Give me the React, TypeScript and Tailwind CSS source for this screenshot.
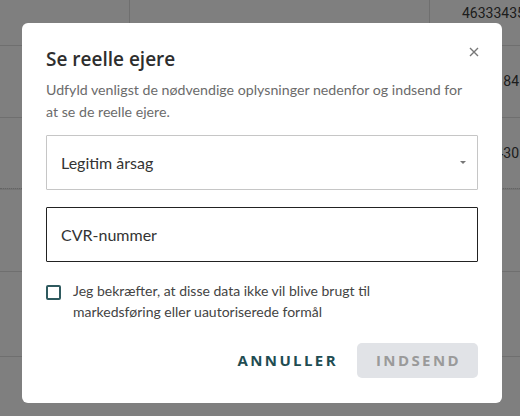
import { useState } from "react";

const bodyFont = { fontFamily: "Lato, 'Noto Sans', sans-serif" };
const headFont = { fontFamily: "'Open Sans', 'Noto Sans', sans-serif" };

function BackgroundTable() {
  return (
    <div className="w-full h-[416px] bg-white text-[14px] text-[#3a3a3a]" style={{ fontFamily: "Roboto, Arial, sans-serif" }}>
      <div className="grid grid-cols-[130px_300px_1fr] h-[46px] border-b border-[#dedede]">
        <div className="border-r border-[#dedede]" />
        <div className="border-r border-[#dedede]" />
        <div className="pl-[32px] pt-[3px] whitespace-nowrap overflow-hidden">46333435</div>
      </div>
      <div className="flex items-center justify-end h-[72px] border-b border-[#dedede] pr-[1px] whitespace-nowrap overflow-hidden">
        184
      </div>
      <div className="flex items-center justify-end h-[70px] pr-[1px] whitespace-nowrap overflow-hidden">
        430
      </div>
      <div className="h-[2px] border-t border-dotted border-[#c8c8c8] bg-[#e8e8e8]" />
      <div className="h-[82px] border-b border-[#dedede]" />
      <div className="h-[85px] border-b border-[#dedede]" />
    </div>
  );
}

function Modal() {
  const [reason, setReason] = useState("");
  const [cvr, setCvr] = useState("");
  const [agreed, setAgreed] = useState(false);

  return (
    <div className="absolute left-[22px] top-[23px] w-[480px] h-[380px] bg-white rounded-[6px] px-[24px] pt-[22px] pb-[25px] flex flex-col">
      <button className="absolute right-[22px] top-[23px] w-[12px] h-[12px] flex items-center justify-center text-[#777]">
        <svg width="10" height="10" viewBox="0 0 10 10" fill="none" stroke="currentColor" strokeWidth="1.4">
          <path d="M1 1L9 9M9 1L1 9" />
        </svg>
      </button>

      <h2 className="text-[19px] leading-[28px] font-semibold text-[#2e2e2e]" style={headFont}>
        Se reelle ejere
      </h2>

      <p className="mt-[6px] pr-[8px] text-[14.2px] leading-[22px] text-[#6b6b6b]" style={bodyFont}>
        Udfyld venligst de nødvendige oplysninger nedenfor og indsend for at se de reelle ejere.
      </p>

      {/* Reason select */}
      <div className="relative mt-[12px] h-[55px] border border-[#c6c6c6] rounded-[1px] flex items-center pl-[14px] pr-[11px]" style={bodyFont}>
        <select
          value={reason}
          onChange={(e) => setReason(e.target.value)}
          className="absolute inset-0 opacity-0 cursor-pointer"
        >
          <option value="">Legitim årsag</option>
        </select>
        <span className="text-[16px] text-[#333]">Legitim årsag</span>
        <span className="ml-auto w-0 h-0 border-l-[3px] border-r-[3px] border-t-[3px] border-l-transparent border-r-transparent border-t-[#777]" />
      </div>

      {/* CVR input */}
      <input
        value={cvr}
        onChange={(e) => setCvr(e.target.value)}
        placeholder="CVR-nummer"
        className="mt-[17px] h-[55px] border border-[#222] rounded-[1px] px-[14px] text-[16px] text-[#333] placeholder:text-[#333] outline-none"
        style={bodyFont}
      />

      {/* Consent */}
      <label className="mt-[18px] flex gap-[12px] cursor-pointer" style={bodyFont}>
        <input type="checkbox" checked={agreed} onChange={(e) => setAgreed(e.target.checked)} className="sr-only" />
        <span className="mt-[5px] shrink-0 w-[15px] h-[15px] border-2 border-[#2f5a5f] rounded-[2px]" />
        <span className="max-w-[380px] text-[14px] leading-[21px] text-[#444]">
          Jeg bekræfter, at disse data ikke vil blive brugt til markedsføring eller uautoriserede formål
        </span>
      </label>

      {/* Actions */}
      <div className="mt-auto flex justify-end items-center" style={headFont}>
        <button className="h-[35px] px-[19px] text-[15px] font-bold tracking-[0.16em] text-[#1f4d52]">
          ANNULLER
        </button>
        <button
          disabled={!agreed}
          className="h-[35px] pl-[19px] pr-[17px] rounded-[5px] bg-[#e1e3e7] text-[15px] font-bold tracking-[0.16em] text-[#9a9a9a]"
        >
          INDSEND
        </button>
      </div>
    </div>
  );
}

export default function App() {
  return (
    <div className="relative w-[520px] h-[416px] overflow-hidden">
      <BackgroundTable />
      <div className="absolute inset-0 bg-black/50" />
      <Modal />
    </div>
  );
}
